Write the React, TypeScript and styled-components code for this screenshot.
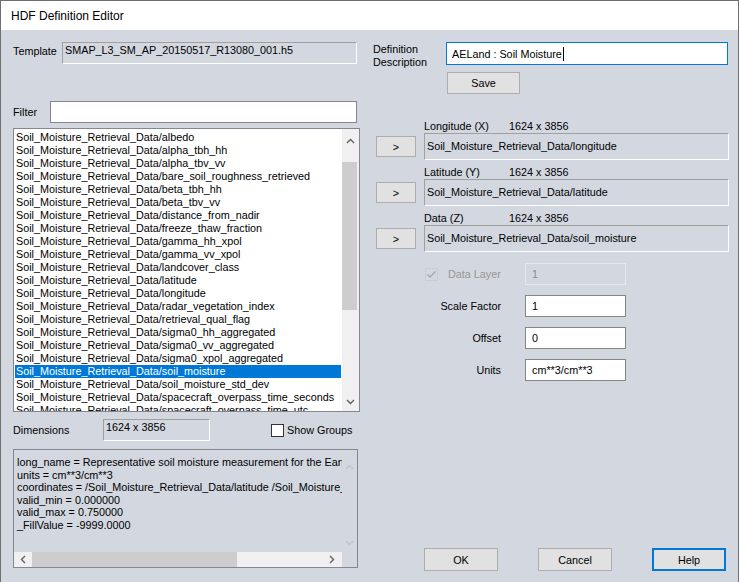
import React from 'react';
import styled, { createGlobalStyle } from 'styled-components';

const BG = '#d3d8e0';

const GlobalStyle = createGlobalStyle`
  html, body {
    margin: 0;
    padding: 0;
    background: #ffffff;
  }
  body {
    font-family: "Liberation Sans", Arial, sans-serif;
    font-size: 10.8px;
    color: #000;
  }
  * {
    box-sizing: border-box;
  }
`;

const Window = styled.div`
  width: 739px;
  height: 582px;
  display: flex;
  flex-direction: column;
  border: 1px solid #6f6f6f;
  border-bottom: none;
  background: ${BG};
  overflow: hidden;
`;

const TitleBar = styled.div`
  height: 29px;
  flex: none;
  background: #fff;
  display: flex;
  align-items: center;
  padding-left: 10px;
  font-size: 12px;
`;

const Body = styled.div`
  flex: 1;
  display: flex;
  padding: 12px 0 0 12px;
`;

const LeftColumn = styled.div`
  width: 347px;
  display: flex;
  flex-direction: column;
`;

const RightColumn = styled.div`
  width: 356px;
  margin-left: 13px;
  display: flex;
  flex-direction: column;
`;

const Row = styled.div<{ $top?: number; $h: number; $align?: string; $pr?: number }>`
  display: flex;
  align-items: ${(p) => p.$align || 'center'};
  height: ${(p) => p.$h}px;
  margin-top: ${(p) => p.$top || 0}px;
  padding-right: ${(p) => p.$pr || 0}px;
`;

const Label = styled.div<{ $w: number; $pt?: number }>`
  width: ${(p) => p.$w}px;
  flex: none;
  padding-top: ${(p) => p.$pt || 0}px;
  line-height: 13px;
  white-space: nowrap;
`;

const SunkenField = styled.div<{ $w?: number; $pt?: number; $center?: boolean }>`
  ${(p) => (p.$w ? `width: ${p.$w}px; flex: none;` : 'flex: 1;')}
  height: 100%;
  border: 1px solid;
  border-color: #a0a0a0 #ffffff #ffffff #a0a0a0;
  padding: ${(p) => p.$pt || 0}px 2px 0 2px;
  line-height: 13px;
  white-space: nowrap;
  overflow: hidden;
  display: flex;
  align-items: ${(p) => (p.$center ? 'center' : 'flex-start')};
`;

const TextBox = styled.div<{ $w?: number; $focus?: boolean; $disabled?: boolean }>`
  ${(p) => (p.$w ? `width: ${p.$w}px; flex: none;` : 'flex: 1;')}
  height: 100%;
  background: ${(p) => (p.$disabled ? BG : '#ffffff')};
  border: 1px solid ${(p) => (p.$focus ? '#0078d7' : p.$disabled ? '#e6e8ec' : '#858585')};
  color: ${(p) => (p.$disabled ? '#8a8a8a' : '#000')};
  padding-left: ${(p) => (p.$focus ? 5 : 6)}px;
  display: flex;
  align-items: center;
  white-space: nowrap;
  overflow: hidden;
`;

const Caret = styled.span`
  display: inline-block;
  width: 1px;
  height: 14px;
  background: #000;
  margin-left: 1px;
`;

const Button = styled.button<{ $default?: boolean; $w: number; $h: number; $ml?: number }>`
  width: ${(p) => p.$w}px;
  height: ${(p) => p.$h}px;
  margin-left: ${(p) => p.$ml || 0}px;
  flex: none;
  background: #e1e1e1;
  border: ${(p) => (p.$default ? '2px solid #0078d7' : '1px solid #adadad')};
  font-family: "Liberation Sans", Arial, sans-serif;
  font-size: 10.8px;
  color: #000;
  padding: 0;
`;

const ListBox = styled.div`
  margin-top: 5px;
  height: 284px;
  border: 1px solid #828790;
  background: #ffffff;
  display: flex;
`;

const ListRows = styled.div`
  flex: 1;
  padding: 2px 1px 0 1px;
  overflow: hidden;
`;

const ListItem = styled.div<{ $selected?: boolean }>`
  height: 13px;
  line-height: 13px;
  padding-left: 1px;
  white-space: nowrap;
  background: ${(p) => (p.$selected ? '#0078d7' : 'transparent')};
  color: ${(p) => (p.$selected ? '#ffffff' : '#000')};
`;

const VScroll = styled.div<{ $bg: string; $w: number }>`
  width: ${(p) => p.$w}px;
  flex: none;
  background: ${(p) => p.$bg};
  display: flex;
  flex-direction: column;
`;

const ArrowCell = styled.div<{ $h?: number; $w?: number }>`
  ${(p) => (p.$h ? `height: ${p.$h}px;` : '')}
  ${(p) => (p.$w ? `width: ${p.$w}px;` : '')}
  flex: none;
  display: flex;
  align-items: center;
  justify-content: center;
`;

const VThumb = styled.div<{ $top: number; $h: number }>`
  margin-top: ${(p) => p.$top}px;
  height: ${(p) => p.$h}px;
  width: 15px;
  background: #cdcdcd;
`;

const Spacer = styled.div`
  flex: 1;
`;

const CheckWrap = styled.div<{ $ml?: number }>`
  display: flex;
  align-items: center;
  align-self: center;
  margin-left: ${(p) => p.$ml || 0}px;
`;

const CheckText = styled.span<{ $ml: number; $disabled?: boolean }>`
  margin-left: ${(p) => p.$ml}px;
  color: ${(p) => (p.$disabled ? '#979797' : '#000')};
  white-space: nowrap;
`;

const TextArea = styled.div`
  margin-top: 8px;
  height: 119px;
  width: 345px;
  border: 1px solid #828790;
  background: ${BG};
  display: grid;
  grid-template-columns: 1fr 15px;
  grid-template-rows: 1fr 15px;
`;

const TextContent = styled.div`
  padding: 6px 0 0 3px;
  line-height: 12.5px;
  white-space: pre;
  overflow: hidden;
`;

const HScroll = styled.div`
  background: #f0f0f0;
  display: flex;
  align-items: center;
`;

const HThumb = styled.div`
  width: 205px;
  height: 15px;
  background: #cdcdcd;
`;

const Corner = styled.div`
  background: ${BG};
`;

const CoordBlock = styled.div<{ $top: number }>`
  display: grid;
  grid-template-columns: 40px 1fr;
  grid-template-rows: 14px 27px;
  column-gap: 8px;
  margin-left: 3px;
  margin-top: ${(p) => p.$top}px;
`;

const CoordHeader = styled.div`
  grid-column: 2;
  display: flex;
  line-height: 14px;
`;

const CoordName = styled.span`
  width: 85px;
  flex: none;
`;

const CoordButton = styled(Button)`
  grid-column: 1;
  grid-row: 2;
  align-self: center;
`;

const CoordField = styled(SunkenField)`
  grid-column: 2;
  grid-row: 2;
`;

const FormGrid = styled.div`
  margin-top: 11px;
  margin-left: 50px;
  display: grid;
  grid-template-columns: 78px 101px;
  grid-auto-rows: 22px;
  column-gap: 24px;
  row-gap: 10px;
  align-items: center;
`;

const FormLabel = styled.div`
  text-align: right;
  white-space: nowrap;
`;

const FooterButtons = styled.div`
  margin-top: auto;
  margin-bottom: 11px;
  margin-left: 51px;
  display: flex;
  gap: 40px;
`;

type Dir = 'up' | 'down' | 'left' | 'right';

const chevronPaths: Record<Dir, string> = {
  up: 'M1 6 L4.5 2.5 L8 6',
  down: 'M1 3 L4.5 6.5 L8 3',
  left: 'M6 1 L2.5 4.5 L6 8',
  right: 'M3 1 L6.5 4.5 L3 8',
};

const Chevron: React.FC<{ dir: Dir; color: string }> = ({ dir, color }) => (
  <svg width="9" height="9" viewBox="0 0 9 9">
    <path d={chevronPaths[dir]} fill="none" stroke={color} strokeWidth="1.4" />
  </svg>
);

const CheckBox: React.FC<{ checked?: boolean; disabled?: boolean }> = ({ checked, disabled }) => (
  <svg width="13" height="13" viewBox="0 0 13 13">
    <rect
      x="0.5"
      y="0.5"
      width="12"
      height="12"
      fill={disabled ? BG : '#ffffff'}
      stroke={disabled ? '#c9ccd2' : '#333333'}
    />
    {checked && (
      <path d="M2.5 6.5 L5 9 L10.5 3.5" fill="none" stroke={disabled ? '#a6a6a6' : '#000'} strokeWidth="1.3" />
    )}
  </svg>
);

const items = [
  'albedo',
  'alpha_tbh_hh',
  'alpha_tbv_vv',
  'bare_soil_roughness_retrieved',
  'beta_tbh_hh',
  'beta_tbv_vv',
  'distance_from_nadir',
  'freeze_thaw_fraction',
  'gamma_hh_xpol',
  'gamma_vv_xpol',
  'landcover_class',
  'latitude',
  'longitude',
  'radar_vegetation_index',
  'retrieval_qual_flag',
  'sigma0_hh_aggregated',
  'sigma0_vv_aggregated',
  'sigma0_xpol_aggregated',
  'soil_moisture',
  'soil_moisture_std_dev',
  'spacecraft_overpass_time_seconds',
  'spacecraft_overpass_time_utc',
];

const attributes = [
  'long_name = Representative soil moisture measurement for the Earth based grid cell',
  'units = cm**3/cm**3',
  'coordinates = /Soil_Moisture_Retrieval_Data/latitude /Soil_Moisture_Retrieval_Data/longitude',
  'valid_min = 0.000000',
  'valid_max = 0.750000',
  '_FillValue = -9999.0000',
].join('\n');

const coords = [
  { name: 'Longitude (X)', field: 'longitude', top: 25 },
  { name: 'Latitude (Y)', field: 'latitude', top: 5 },
  { name: 'Data (Z)', field: 'soil_moisture', top: 5 },
];

const PREFIX = 'Soil_Moisture_Retrieval_Data/';

export default function App() {
  return (
    <>
      <GlobalStyle />
      <Window>
        <TitleBar>HDF Definition Editor</TitleBar>
        <Body>
          <LeftColumn>
            <Row $h={22} $align="flex-start" $pr={3}>
              <Label $w={49} $pt={3}>Template</Label>
              <SunkenField $pt={1}>SMAP_L3_SM_AP_20150517_R13080_001.h5</SunkenField>
            </Row>
            <Row $top={37} $h={22} $pr={3}>
              <Label $w={37}>Filter</Label>
              <TextBox />
            </Row>
            <ListBox>
              <ListRows>
                {items.map((it) => (
                  <ListItem key={it} $selected={it === 'soil_moisture'}>
                    {PREFIX + it}
                  </ListItem>
                ))}
              </ListRows>
              <VScroll $bg="#f0f0f0" $w={17}>
                <ArrowCell $h={25}>
                  <Chevron dir="up" color="#606060" />
                </ArrowCell>
                <VThumb $top={8} $h={148} />
                <Spacer />
                <ArrowCell $h={20}>
                  <Chevron dir="down" color="#606060" />
                </ArrowCell>
              </VScroll>
            </ListBox>
            <Row $top={7} $h={22} $align="flex-start">
              <Label $w={90} $pt={5}>Dimensions</Label>
              <SunkenField $w={107} $pt={1}>1624 x 3856</SunkenField>
              <CheckWrap $ml={61}>
                <CheckBox />
                <CheckText $ml={3}>Show Groups</CheckText>
              </CheckWrap>
            </Row>
            <TextArea>
              <TextContent>{attributes}</TextContent>
              <VScroll $bg={BG} $w={15}>
                <ArrowCell $h={34}>
                  <Chevron dir="up" color="#c0c4ca" />
                </ArrowCell>
                <Spacer />
                <ArrowCell $h={20}>
                  <Chevron dir="down" color="#c0c4ca" />
                </ArrowCell>
              </VScroll>
              <HScroll>
                <ArrowCell $w={18}>
                  <Chevron dir="left" color="#606060" />
                </ArrowCell>
                <HThumb />
                <Spacer />
                <ArrowCell $w={22}>
                  <Chevron dir="right" color="#606060" />
                </ArrowCell>
              </HScroll>
              <Corner />
            </TextArea>
          </LeftColumn>

          <RightColumn>
            <Row $h={23} $align="stretch">
              <Label $w={73} $pt={1}>
                Definition
                <br />
                Description
              </Label>
              <TextBox $focus $w={282}>
                AELand : Soil Moisture
                <Caret />
              </TextBox>
            </Row>
            <Row $top={7} $h={22}>
              <Button $w={73} $h={22} $ml={74}>
                Save
              </Button>
            </Row>

            {coords.map((c) => (
              <CoordBlock key={c.name} $top={c.top}>
                <CoordHeader>
                  <CoordName>{c.name}</CoordName>
                  <span>1624 x 3856</span>
                </CoordHeader>
                <CoordButton $w={40} $h={21}>
                  &gt;
                </CoordButton>
                <CoordField $center>{PREFIX + c.field}</CoordField>
              </CoordBlock>
            ))}

            <FormGrid>
              <CheckWrap $ml={2}>
                <CheckBox checked disabled />
                <CheckText $ml={10} $disabled>
                  Data Layer
                </CheckText>
              </CheckWrap>
              <TextBox $disabled>1</TextBox>
              <FormLabel>Scale Factor</FormLabel>
              <TextBox>1</TextBox>
              <FormLabel>Offset</FormLabel>
              <TextBox>0</TextBox>
              <FormLabel>Units</FormLabel>
              <TextBox>cm**3/cm**3</TextBox>
            </FormGrid>

            <FooterButtons>
              <Button $w={74} $h={23}>OK</Button>
              <Button $w={74} $h={23}>Cancel</Button>
              <Button $w={74} $h={23} $default>
                Help
              </Button>
            </FooterButtons>
          </RightColumn>
        </Body>
      </Window>
    </>
  );
}
